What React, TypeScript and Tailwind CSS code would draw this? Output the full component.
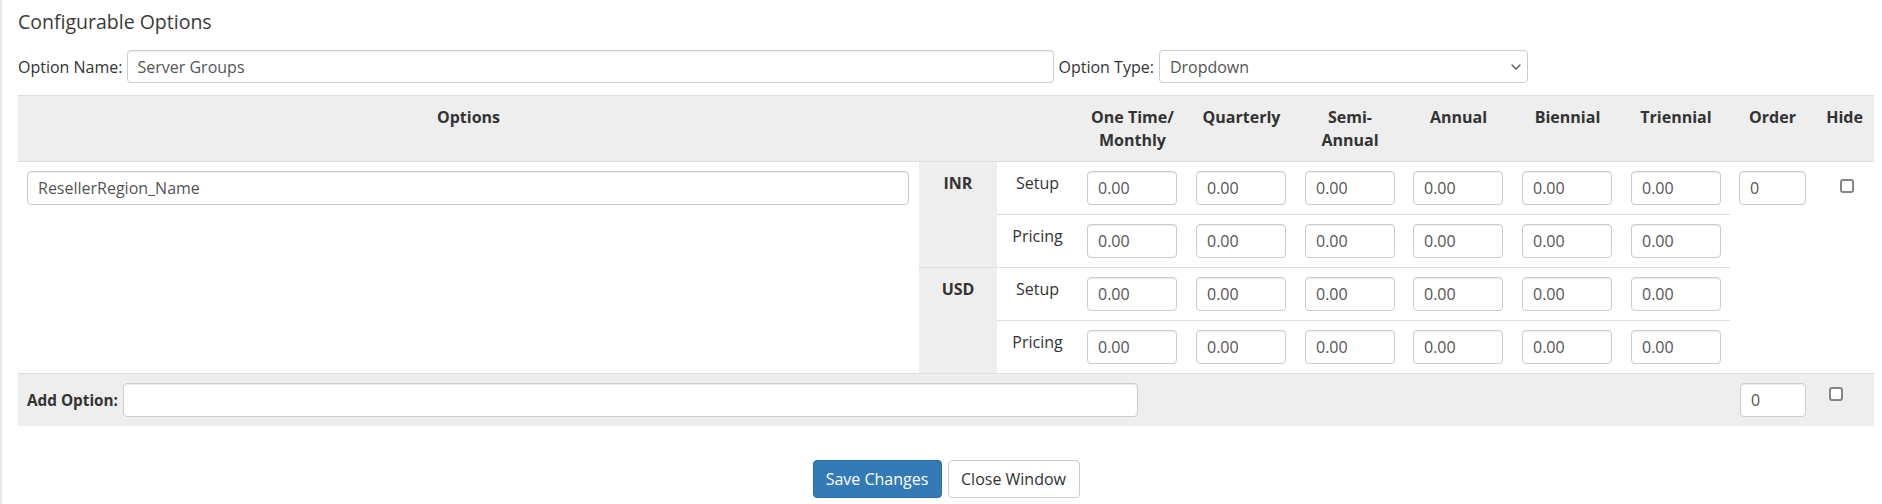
import React from 'react'

const inputCls =
  'h-[34px] rounded-[4px] border border-[#ccc] bg-white px-[10px] text-[16px] text-[#555] shadow-[inset_0_1px_1px_rgba(0,0,0,0.075)] outline-none font-[inherit]'

function Field({ value, className = '' }: { value: string; className?: string }) {
  return <input readOnly value={value} className={`${inputCls} ${className}`} />
}

function Check() {
  return <span className="inline-block h-[14px] w-[14px] rounded-[3px] border-2 border-[#858585] bg-white" />
}

const priceCols = 6

function PriceCells({ top }: { top?: boolean }) {
  return (
    <>
      {Array.from({ length: priceCols }).map((_, i) => (
        <td key={i} className={`px-[9px] py-[9px] align-top ${top ? 'border-t border-[#ddd]' : ''}`}>
          <Field value="0.00" className="w-[90px]" />
        </td>
      ))}
    </>
  )
}

export default function App() {
  return (
    <div className="min-h-[504px] border-l-2 border-[#e5e8ec] bg-white pl-[16px] pr-[8px] pt-[8px] font-['Open_Sans',sans-serif] text-[16px] text-[#333]">
      {/* Title */}
      <h2 className="text-[19.5px] leading-[28px] text-[#3a3a3a]">Configurable Options</h2>

      {/* Option name / type */}
      <div className="mt-[14px] flex h-[33px] items-center gap-[4px]">
        <span>Option Name:</span>
        <input
          readOnly
          value="Server Groups"
          className="h-[33px] w-[927px] rounded-[4px] border border-[#ccc] bg-white px-[10px] text-[16px] text-[#555] shadow-[inset_0_1px_1px_rgba(0,0,0,0.075)] outline-none"
        />
        <span className="ml-[1px]">Option Type:</span>
        <div className="ml-[1px] flex h-[33px] w-[369px] items-center justify-between rounded-[4px] border border-[#ccc] bg-white pl-[10px] pr-[6px] text-[#555]">
          <span>Dropdown</span>
          <svg width="10" height="6" viewBox="0 0 10 6" fill="none">
            <path d="M1 1l4 4 4-4" stroke="#555" strokeWidth="1.3" strokeLinecap="round" strokeLinejoin="round" />
          </svg>
        </div>
      </div>

      {/* Options table */}
      <table className="mt-[12px] w-[1856px] table-fixed border-separate border-spacing-0">
        <colgroup>
          <col className="w-[901px]" />
          <col className="w-[78px]" />
          <col className="w-[81px]" />
          <col className="w-[109px]" />
          <col className="w-[109px]" />
          <col className="w-[108px]" />
          <col className="w-[109px]" />
          <col className="w-[109px]" />
          <col className="w-[108px]" />
          <col className="w-[85px]" />
          <col className="w-[59px]" />
        </colgroup>
        <thead>
          <tr className="bg-[#eee] font-bold leading-[23px]">
            <th className="border-y border-[#ddd] px-[9px] pb-[9px] pt-[10px] text-center align-top">Options</th>
            <th className="border-y border-[#ddd]" colSpan={2}></th>
            <th className="border-y border-[#ddd] pb-[9px] pt-[10px] text-center align-top">
              One Time/
              <br />
              Monthly
            </th>
            <th className="border-y border-[#ddd] pb-[9px] pt-[10px] text-center align-top">Quarterly</th>
            <th className="border-y border-[#ddd] pb-[9px] pt-[10px] text-center align-top">
              Semi-
              <br />
              Annual
            </th>
            <th className="border-y border-[#ddd] pb-[9px] pt-[10px] text-center align-top">Annual</th>
            <th className="border-y border-[#ddd] pb-[9px] pt-[10px] text-center align-top">Biennial</th>
            <th className="border-y border-[#ddd] pb-[9px] pt-[10px] text-center align-top">Triennial</th>
            <th className="border-y border-[#ddd] pb-[9px] pt-[10px] text-center align-top">Order</th>
            <th className="border-y border-[#ddd] pb-[9px] pt-[10px] text-center align-top">Hide</th>
          </tr>
        </thead>
        <tbody className="leading-[23px]">
          <tr>
            <td rowSpan={4} className="pl-[9px] pr-[10px] pt-[9px] align-top">
              <Field value="ResellerRegion_Name" className="w-full" />
            </td>
            <td rowSpan={2} className="bg-[#eee] pt-[10px] text-center align-top font-bold">INR</td>
            <td className="pt-[10px] text-center align-top">Setup</td>
            <PriceCells />
            <td rowSpan={4} className="px-[9px] pt-[9px] align-top">
              <Field value="0" className="w-[67px]" />
            </td>
            <td rowSpan={4} className="pl-[25px] pt-[14px] align-top">
              <Check />
            </td>
          </tr>
          <tr>
            <td className="border-t border-[#ddd] pt-[10px] text-center align-top">Pricing</td>
            <PriceCells top />
          </tr>
          <tr>
            <td rowSpan={2} className="border-t border-[#ddd] bg-[#eee] pt-[10px] text-center align-top font-bold">USD</td>
            <td className="border-t border-[#ddd] pt-[10px] text-center align-top">Setup</td>
            <PriceCells top />
          </tr>
          <tr>
            <td className="border-t border-[#ddd] pt-[10px] text-center align-top">Pricing</td>
            <PriceCells top />
          </tr>
        </tbody>
      </table>

      {/* Add option row */}
      <div className="flex w-[1856px] items-start border-t border-[#ddd] bg-[#eee] pb-[9px] pl-[9px] pt-[9px]">
        <span className="mt-[6px] w-[91px] whitespace-nowrap text-[15.3px] font-bold leading-[23px]">Add Option:</span>
        <Field value="" className="ml-[5px] w-[1015px]" />
        <Field value="0" className="ml-[602px] w-[66px]" />
        <span className="ml-[23px] mt-[4px] flex">
          <Check />
        </span>
      </div>

      {/* Buttons */}
      <div className="mt-[34px] flex w-[1856px] justify-center gap-[6px]">
        <button className="h-[38px] w-[129px] rounded-[4px] border border-[#2e6da4] bg-[#337ab7] text-[16px] text-white">
          Save Changes
        </button>
        <button className="h-[38px] w-[132px] rounded-[4px] border border-[#ccc] bg-white text-[16px] text-[#333]">
          Close Window
        </button>
      </div>
    </div>
  )
}
